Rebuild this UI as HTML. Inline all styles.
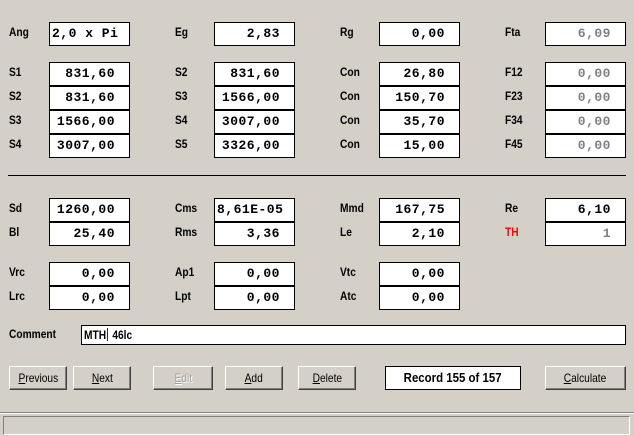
<!DOCTYPE html>
<html><head><meta charset="utf-8"><style>
body{margin:0;width:634px;height:436px;background:#d4d0c8;position:relative;overflow:hidden;font-family:"Liberation Sans",sans-serif;}
.l{position:absolute;font-size:12px;font-weight:bold;color:#000;line-height:14px;transform:scaleX(0.85);transform-origin:left;margin-top:-2px;}
.b{position:absolute;width:79px;height:22px;border:1px solid #000;background:#fff;font-family:"Liberation Mono",monospace;font-weight:bold;font-size:13px;letter-spacing:0.5px;line-height:22px;box-sizing:content-box;}
.b span{position:absolute;right:14px;top:0;}
.b.left span{left:2px;right:auto;}
.g{color:#808080;}
.btn{position:absolute;top:366px;height:24px;box-sizing:border-box;border:1px solid;border-color:#fff #404040 #404040 #fff;box-shadow:inset -1px -1px 0 #808080;text-align:center;line-height:21px;}
.btn span{display:inline-block;font-size:12px;transform:scaleX(0.85);}
</style></head><body>
<div class="l" style="left:9px;top:27px">Ang</div>
<div class="l" style="left:175px;top:27px">Eg</div>
<div class="l" style="left:340px;top:27px">Rg</div>
<div class="l" style="left:505px;top:27px">Fta</div>
<div class="b left" style="left:49px;top:22px"><span>2,0 x Pi</span></div>
<div class="b" style="left:214px;top:22px"><span>2,83</span></div>
<div class="b" style="left:379px;top:22px"><span>0,00</span></div>
<div class="b g" style="left:545px;top:22px"><span>6,09</span></div>

<div class="l" style="left:9px;top:67px">S1</div><div class="l" style="left:9px;top:91px">S2</div><div class="l" style="left:9px;top:115px">S3</div><div class="l" style="left:9px;top:139px">S4</div>
<div class="l" style="left:175px;top:67px">S2</div><div class="l" style="left:175px;top:91px">S3</div><div class="l" style="left:175px;top:115px">S4</div><div class="l" style="left:175px;top:139px">S5</div>
<div class="l" style="left:340px;top:67px">Con</div><div class="l" style="left:340px;top:91px">Con</div><div class="l" style="left:340px;top:115px">Con</div><div class="l" style="left:340px;top:139px">Con</div>
<div class="l" style="left:505px;top:67px">F12</div><div class="l" style="left:505px;top:91px">F23</div><div class="l" style="left:505px;top:115px">F34</div><div class="l" style="left:505px;top:139px">F45</div>

<div class="b" style="left:49px;top:62px"><span>831,60</span></div>
<div class="b" style="left:49px;top:86px"><span>831,60</span></div>
<div class="b" style="left:49px;top:110px"><span>1566,00</span></div>
<div class="b" style="left:49px;top:134px"><span>3007,00</span></div>
<div class="b" style="left:214px;top:62px"><span>831,60</span></div>
<div class="b" style="left:214px;top:86px"><span>1566,00</span></div>
<div class="b" style="left:214px;top:110px"><span>3007,00</span></div>
<div class="b" style="left:214px;top:134px"><span>3326,00</span></div>
<div class="b" style="left:379px;top:62px"><span>26,80</span></div>
<div class="b" style="left:379px;top:86px"><span>150,70</span></div>
<div class="b" style="left:379px;top:110px"><span>35,70</span></div>
<div class="b" style="left:379px;top:134px"><span>15,00</span></div>
<div class="b g" style="left:545px;top:62px"><span>0,00</span></div>
<div class="b g" style="left:545px;top:86px"><span>0,00</span></div>
<div class="b g" style="left:545px;top:110px"><span>0,00</span></div>
<div class="b g" style="left:545px;top:134px"><span>0,00</span></div>

<div style="position:absolute;left:8px;top:175px;width:618px;height:1px;background:#000"></div>

<div class="l" style="left:9px;top:203px">Sd</div><div class="l" style="left:9px;top:227px">Bl</div>
<div class="l" style="left:175px;top:203px">Cms</div><div class="l" style="left:175px;top:227px">Rms</div>
<div class="l" style="left:340px;top:203px">Mmd</div><div class="l" style="left:340px;top:227px">Le</div>
<div class="l" style="left:505px;top:203px">Re</div><div class="l" style="left:505px;top:227px;color:#ff0000">TH</div>
<div class="b" style="left:49px;top:198px"><span>1260,00</span></div>
<div class="b" style="left:49px;top:222px"><span>25,40</span></div>
<div class="b left" style="left:214px;top:198px"><span>8,61E-05</span></div>
<div class="b" style="left:214px;top:222px"><span>3,36</span></div>
<div class="b" style="left:379px;top:198px"><span>167,75</span></div>
<div class="b" style="left:379px;top:222px"><span>2,10</span></div>
<div class="b" style="left:545px;top:198px"><span>6,10</span></div>
<div class="b g" style="left:545px;top:222px"><span>1</span></div>

<div class="l" style="left:9px;top:267px">Vrc</div><div class="l" style="left:9px;top:291px">Lrc</div>
<div class="l" style="left:175px;top:267px">Ap1</div><div class="l" style="left:175px;top:291px">Lpt</div>
<div class="l" style="left:340px;top:267px">Vtc</div><div class="l" style="left:340px;top:291px">Atc</div>
<div class="b" style="left:49px;top:262px"><span>0,00</span></div>
<div class="b" style="left:49px;top:286px"><span>0,00</span></div>
<div class="b" style="left:214px;top:262px"><span>0,00</span></div>
<div class="b" style="left:214px;top:286px"><span>0,00</span></div>
<div class="b" style="left:379px;top:262px"><span>0,00</span></div>
<div class="b" style="left:379px;top:286px"><span>0,00</span></div>

<div class="l" style="left:9px;top:329px">Comment</div>
<div style="position:absolute;left:81px;top:325px;width:543px;height:18px;border:1px solid #000;background:#fff;line-height:18px;"><span style="position:absolute;left:2px;top:0;font-size:12px;font-weight:bold;transform:scaleX(0.85);transform-origin:left;white-space:nowrap">MTH<span style="display:inline-block;width:1px;height:13px;background:#000;vertical-align:-2px;margin:0 2px 0 1px"></span> 46lc</span></div>

<div class="btn" style="left:9px;width:58px"><span><u>P</u>revious</span></div>
<div class="btn" style="left:73px;width:58px"><span><u>N</u>ext</span></div>
<div class="btn" style="left:153px;width:60px;color:#a0a0a0;text-shadow:1px 1px 0 #fff"><span><u>E</u>dit</span></div>
<div class="btn" style="left:225px;width:58px"><span><u>A</u>dd</span></div>
<div class="btn" style="left:298px;width:58px"><span><u>D</u>elete</span></div>
<div style="position:absolute;left:385px;top:366px;width:136px;height:24px;box-sizing:border-box;border:1px solid #000;background:#fff;text-align:center;line-height:22px"><span style="display:inline-block;font-size:13px;font-weight:bold;transform:scaleX(0.88)">Record 155 of 157</span></div>
<div class="btn" style="left:545px;width:81px"><span><u>C</u>alculate</span></div>

<div style="position:absolute;left:0;top:412px;width:634px;height:1px;background:#808080"></div>
<div style="position:absolute;left:0;top:413px;width:634px;height:1px;background:#fff"></div>
<div style="position:absolute;left:3px;top:416px;width:627px;height:19px;box-sizing:border-box;border:1px solid;border-color:#808080 #fff #fff #808080"></div>
</body></html>
